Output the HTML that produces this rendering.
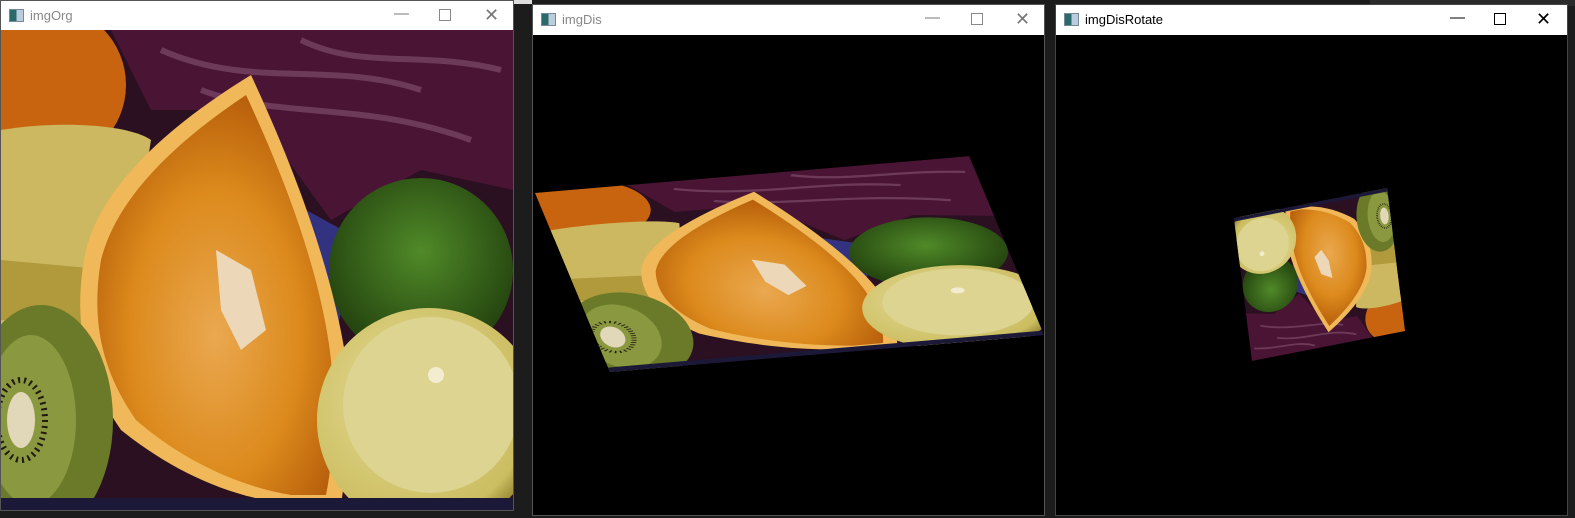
<!DOCTYPE html>
<html><head><meta charset="utf-8"><style>
body{margin:0;width:1575px;height:518px;background:#1c1c1c;position:relative;overflow:hidden;font-family:"Liberation Sans","Noto Sans CJK SC",sans-serif}
.win{position:absolute;background:#000;border:1px solid #555;box-sizing:border-box}
.tb{position:absolute;left:0;right:0;top:0;height:30px;background:#fff}
.tb .t{position:absolute;left:29px;top:7px;font-size:13px;color:#888}
.ic{position:absolute;left:8px;top:8px;width:13px;height:11px;border:1px solid #789;background:linear-gradient(90deg,#2a6a6a 50%,#bcd 50%)}
.btn{position:absolute;top:0;font-size:15px;color:#777}
svg{position:absolute;left:0;top:0}
</style></head><body>
<div style="position:absolute;left:1370px;top:0;width:205px;height:6px;background:#2a2a2a"></div>
<div style="position:absolute;left:513px;top:0;width:19px;height:4px;background:#ddd"></div>

<div class="win" style="left:0;top:0;width:514px;height:511px">
 <div class="tb"><div class="ic"></div><div class="t">imgOrg</div>
 <div class="btn" style="left:393px;top:4px">—</div><div style="position:absolute;left:438px;top:8px;width:10px;height:10px;border:1px solid #888"></div><div class="btn" style="left:483px;top:4px;font-size:18px">✕</div></div>
</div>
<div class="win" style="left:532px;top:4px;width:513px;height:512px">
 <div class="tb"><div class="ic"></div><div class="t">imgDis</div>
 <div class="btn" style="left:392px;top:4px">—</div><div style="position:absolute;left:438px;top:8px;width:10px;height:10px;border:1px solid #888"></div><div class="btn" style="left:482px;top:4px;font-size:18px">✕</div></div>
</div>
<div class="win" style="left:1055px;top:4px;width:513px;height:512px;border-color:#444">
 <div class="tb"><div class="ic"></div><div class="t" style="color:#000">imgDisRotate</div>
 <div class="btn" style="left:394px;top:4px;color:#000">—</div><div style="position:absolute;left:438px;top:8px;width:10px;height:10px;border:1.5px solid #000"></div><div class="btn" style="left:480px;top:4px;font-size:18px;color:#000">✕</div></div>
</div>

<svg width="1575" height="518" viewBox="0 0 1575 518">
<defs>
<clipPath id="c"><rect x="0" y="0" width="512" height="480"/></clipPath>
<radialGradient id="og" cx="0.5" cy="0.6" r="0.6"><stop offset="0" stop-color="#eaa850"/><stop offset="0.6" stop-color="#dc8a1c"/><stop offset="1" stop-color="#b8600c"/></radialGradient>
<radialGradient id="lm" cx="0.4" cy="0.4" r="0.7"><stop offset="0" stop-color="#e6dc98"/><stop offset="0.8" stop-color="#cbbd60"/><stop offset="1" stop-color="#7a6a1c"/></radialGradient>
<radialGradient id="li" cx="0.5" cy="0.4" r="0.6"><stop offset="0" stop-color="#508a28"/><stop offset="1" stop-color="#22400e"/></radialGradient>
<g id="s" clip-path="url(#c)">
 <rect width="512" height="480" fill="#2a1020"/>
 <path d="M110 0H512V160L420 140 330 190 250 80 150 80Z" fill="#4a1434"/>
 <path d="M160 20 C250 60 330 30 420 60 M200 60 C280 90 360 70 470 110 M300 10 C360 40 420 20 500 40" stroke="#906080" stroke-width="6" fill="none" opacity=".5"/>
 <circle cx="45" cy="55" r="80" fill="#c86410"/>
 <path d="M0 100 C60 90 130 95 150 110 L120 300 0 300Z" fill="#ccb860"/>
 <path d="M0 230 L110 240 100 300 0 290Z" fill="#b09a3c"/>
 <path d="M250 150 L360 210 330 320 260 300Z" fill="#323280"/>
 <circle cx="420" cy="240" r="92" fill="url(#li)"/>
 <path d="M250 45 C285 120 330 230 345 330 C350 400 345 440 340 475 L300 475 C230 470 170 440 120 400 C85 350 70 290 85 220 C100 160 160 100 250 45Z" fill="#f0b858"/>
 <path d="M245 65 C280 140 320 240 330 330 C335 400 330 440 325 465 L290 465 C230 455 175 425 135 390 C100 340 90 290 100 230 C115 170 170 115 245 65Z" fill="url(#og)"/>
 <path d="M215 220 L250 240 265 300 240 320 220 280Z" fill="#ecd8b8"/>
 <ellipse cx="40" cy="390" rx="72" ry="115" fill="#6a7a28"/>
 <ellipse cx="30" cy="390" rx="45" ry="85" fill="#8a9840"/>
 <ellipse cx="20" cy="390" rx="14" ry="28" fill="#e0d8b8"/>
 <ellipse cx="20" cy="390" rx="24" ry="40" fill="none" stroke="#201a10" stroke-width="6" stroke-dasharray="2 4"/>
 <circle cx="428" cy="390" r="112" fill="url(#lm)"/>
 <circle cx="430" cy="375" r="88" fill="#dcd490"/>
 <circle cx="435" cy="345" r="8" fill="#f4ecd0"/>
 <rect x="0" y="468" width="512" height="12" fill="#1c1838"/>
</g>
</defs>
<use href="#s" transform="translate(1,30)"/>
<use href="#s" transform="matrix(0.848,-0.072,0.156,0.373,535,193)"/>
<use href="#s" transform="matrix(-0.299,0.0586,-0.0375,-0.298,1405,331)"/>
</svg>
</body></html>
